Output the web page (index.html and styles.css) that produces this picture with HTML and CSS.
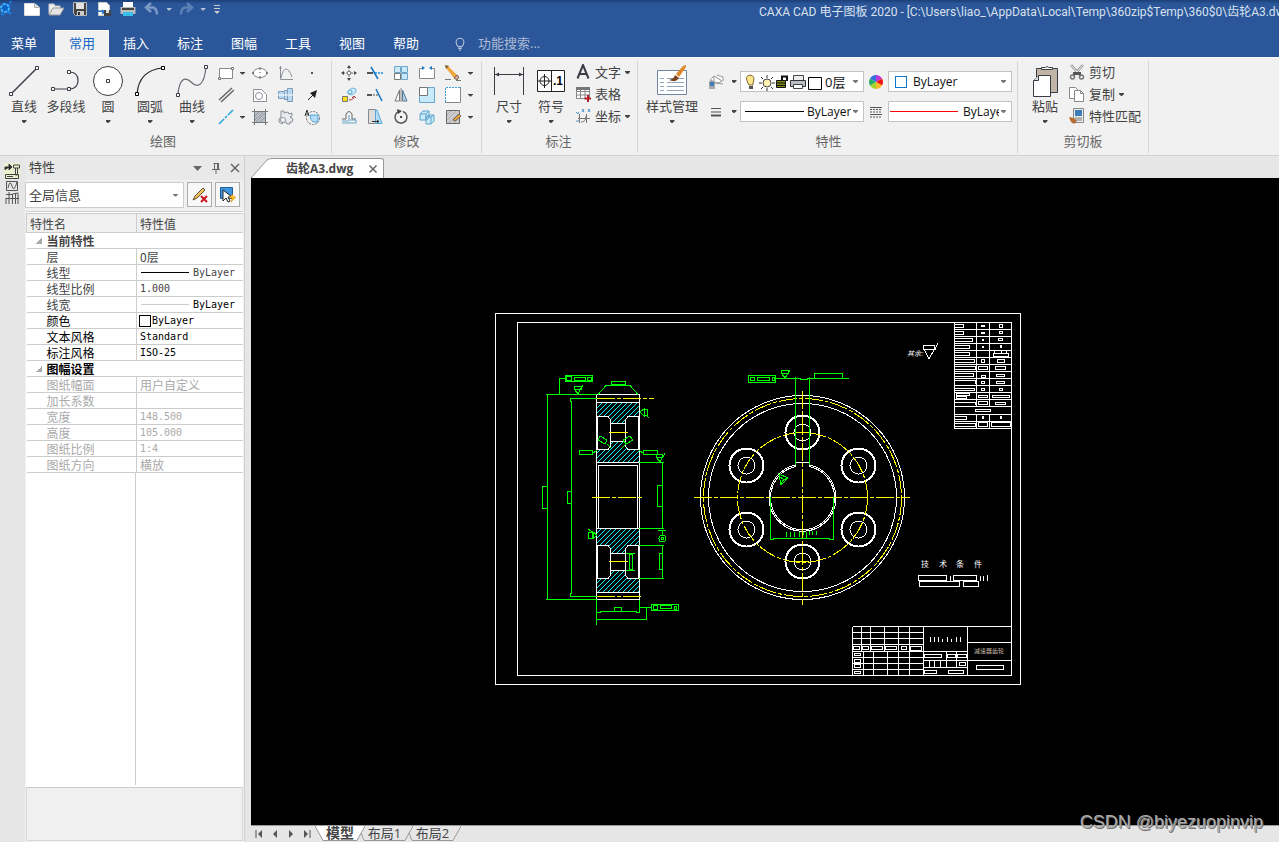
FILE: index.html
```html
<!DOCTYPE html>
<html lang="zh-CN">
<head>
<meta charset="utf-8">
<title>CAXA CAD 电子图板 2020</title>
<link rel="stylesheet" href="styles.css">
</head>
<body>
<div class="app">
<header class="titlebar">
  <div class="quick">
    <svg class="logo" viewBox="0 0 13 18"><path d="M1 6Q5 1 10 4L11 9L6 12L1 10Z" fill="#0b63c4"/><circle cx="5" cy="8" r="4" fill="none" stroke="#45b4ff" stroke-width="2" stroke-dasharray="3 1"/><path d="M7 11l4 3M1 13l3 2M10 3l1-2" stroke="#1683e8" stroke-width="2"/></svg>
    <button aria-label="新建"><svg viewBox="0 0 16 16"><path d="M0.500 2.500h10l5 4v8h-15z" fill="#fff" stroke="#ddd"/><path d="M10.500 2.500v4h5" fill="#ddd" stroke="#aaa"/></svg></button>
    <button aria-label="打开"><svg viewBox="0 0 16 16"><path d="M1 13V3h5l1 2h5v3" fill="#eee" stroke="#ccc"/><path d="M1 14L5 7h11l-4 7z" fill="#e4e4e4" stroke="#999"/></svg></button>
    <button aria-label="保存"><svg viewBox="0 0 16 16"><path d="M1.500 1.500h13v13h-11l-2-2z" fill="#444" stroke="#bbb"/><path d="M4 2h8v6H4z" fill="#e2e2e2"/><path d="M5 10h7v4H5z" fill="#ccc"/><path d="M6 11h2v3H6z" fill="#333"/></svg></button>
    <button aria-label="另存为"><svg viewBox="0 0 16 16"><path d="M2.500 1.500h8l3 3v10h-11z" fill="#fff" stroke="#ccc"/><path d="M1 10q5 0 7 1M6 9l3 2-3 2" stroke="#1c6fc0" stroke-width="1.500" fill="none"/><path d="M8 9h7v6H8z" fill="#444"/><path d="M10 9h3v3h-3z" fill="#ddd"/></svg></button>
    <button aria-label="打印"><svg viewBox="0 0 16 16"><path d="M3 1h10v5H3z" fill="#fff"/><path d="M.5 6h15v7H.5z" fill="#bbb"/><path d="M2 7h12v2H2z" fill="#444"/><path d="M3 11h10v4H3z" fill="#39c0ee"/></svg></button>
    <button aria-label="撤销"><svg viewBox="0 0 16 16"><path d="M7 2L2 6.500 7 11M2 6.500h7q4 1 4 7" fill="none" stroke="#7d99c6" stroke-width="2.500"/></svg></button>
    <button class="slim" aria-label="撤销列表"><i class="caret pale"></i></button>
    <button aria-label="重做"><svg viewBox="0 0 16 16"><path d="M9 2l5 4.500L9 11M14 6.500H7q-4 1-4 7" fill="none" stroke="#5f80b5" stroke-width="2.500"/></svg></button>
    <button class="slim" aria-label="重做列表"><i class="caret pale"></i></button>
    <button class="slim" aria-label="自定义"><svg viewBox="0 0 8 12"><path d="M1 2.500h6M1 5.500h6" stroke="#ccc" stroke-width="1"/><path d="M1 8h6L4 11z" fill="#ccc"/></svg></button>
  </div>
  <h1>CAXA CAD 电子图板 2020 - [C:\Users\liao_\AppData\Local\Temp\360zip$Temp\360$0\齿轮A3.dwg</h1>
</header>
<nav class="tabs">
  <button class="menu">菜单</button><button class="active">常用</button><button>插入</button><button>标注</button><button>图幅</button><button>工具</button><button>视图</button><button>帮助</button>
  <label class="search"><svg viewBox="0 0 12 16"><path d="M4 11Q1.500 8.500 1.500 6a4.500 4.500 0 0 1 9 0Q10.500 8.500 8 11zM4 13h4M5 15h2" fill="none" stroke="#b8c4da" stroke-width="1.200"/></svg><input type="text" placeholder="功能搜索..." aria-label="功能搜索"></label>
</nav>
<section class="ribbon">
  <div class="group draw">
    <div class="tools">
      <button class="big"><svg viewBox="0 0 32 32"><path d="M3 29L29 3" stroke="#3a3d46" stroke-width="1.500"/><path d="M1.500 27.500h3v3h-3zM27.500 1.500h3v3h-3z" fill="#fff" stroke="#3a3d46"/></svg><span>直线</span><i class="caret"></i></button>
      <button class="big"><svg viewBox="0 0 32 32"><path d="M3 24h16q9 0 9-8.500T19 7" fill="none" stroke="#3a3d46" stroke-width="1.200"/><path d="M1.500 22.500h3v3h-3zM17.500 22.500h3v3h-3zM17.500 5.500h3v3h-3z" fill="#fff" stroke="#3a3d46"/></svg><span>多段线</span></button>
      <button class="big"><svg viewBox="0 0 32 32"><circle cx="16" cy="16" r="14.500" fill="#fff" stroke="#3a3d46"/><path d="M14.500 14.500h3v3h-3z" fill="#fff" stroke="#3a3d46"/></svg><span>圆</span><i class="caret"></i></button>
      <button class="big"><svg viewBox="0 0 32 32"><path d="M3 29Q5 5 29 3" fill="none" stroke="#222" stroke-width="1.200"/><path d="M1.500 27.500h3v3h-3zM27.500 1.500h3v3h-3z" fill="#fff" stroke="#000"/></svg><span>圆弧</span><i class="caret"></i></button>
      <button class="big"><svg viewBox="0 0 32 32"><path d="M2 30C3 14 9 11 15 17S28 22 30 2" fill="none" stroke="#666b75" stroke-width="1.200"/><path d="M.5 28.500h3v3h-3zM28.500.5h3v3h-3z" fill="#fff" stroke="#3a3d46"/></svg><span>曲线</span><i class="caret"></i></button>
      <div class="grid draw-grid">
        <button aria-label="矩形"><svg viewBox="0 0 16 16"><path d="M1.500 3.500h13v10h-13z" fill="#fff" stroke="#888"/><path d="M.5 12.500h2v2h-2zM13.500 2.500h2v2h-2z" fill="#fff" stroke="#777"/></svg></button>
        <button aria-label="矩形选项"><i class="caret"></i></button>
        <button aria-label="椭圆"><svg viewBox="0 0 16 16"><ellipse cx="8" cy="8" rx="7" ry="4.500" fill="#fff" stroke="#888"/><path d="M7 3.500h2M7 12.500h2M0 8h2M14 8h2" stroke="#777" stroke-width="2"/><path d="M7.500 7.500h1" stroke="#555"/></svg></button>
        <button aria-label="公式曲线"><svg viewBox="0 0 16 16"><path d="M2.500 1v13.500H15M1 3h3M3 13Q5 4 8 4t6 8" fill="none" stroke="#8b9098"/></svg></button>
        <button aria-label="点"><svg viewBox="0 0 16 16"><path d="M7 7h2v2H7z" fill="#555"/></svg></button>
        <button aria-label="平行线"><svg viewBox="0 0 16 16"><path d="M1 13L14 1M3 15L16 3" stroke="#666" stroke-width="1.500"/></svg></button>
        <span></span>
        <button aria-label="局部放大"><svg viewBox="0 0 16 16"><path d="M1.500 2.500h8l5 5v7h-13z" fill="#fff" stroke="#8b9098"/><circle cx="7" cy="9" r="3.500" fill="none" stroke="#8b9098"/></svg></button>
        <button aria-label="孔轴"><svg viewBox="0 0 16 16"><path d="M.5 4.500h6v7h-6zM6.500 3.500h3v9h-3zM9.500 1.500h5v13h-5z" fill="#b9d8f2" stroke="#7f9cbb"/><path d="M0 8h16" stroke="#fff"/></svg></button>
        <button aria-label="箭头"><svg viewBox="0 0 16 16"><path d="M4 13L9 8" stroke="#222"/><path d="M13 3l-2 8-5-5z" fill="#222"/></svg></button>
        <button aria-label="构造线"><svg viewBox="0 0 16 16"><path d="M1 15L6 10M7 9l2-2M10 6l5-5" stroke="#25a4e0" stroke-width="1.500"/></svg></button>
        <button aria-label="构造线选项"><i class="caret"></i></button>
        <button aria-label="剖面线"><svg viewBox="0 0 16 16"><path d="M2.500 2.500h11v11h-11z" fill="#b7bdc4"/><path d="M3 7l4-4M3 11l8-8M4 13l9-9M8 13l5-5" stroke="#969ca3"/><path d="M2.500 0v16M13.500 0v16M0 2.500h16M0 13.500h16" fill="none" stroke="#73797f"/></svg></button>
        <button aria-label="齿轮"><svg viewBox="0 0 16 16"><path d="M3 5V2h3v2l4-1 1 2 3-1v3l-2 1 3 2-1 3h-2v2h-3l-1-2H6l-2 2-3-2v-3l2-2z" fill="#e8eaed" stroke="#8b9098"/><circle cx="5" cy="11" r="2.500" fill="#fff" stroke="#8b9098"/></svg></button>
        <button aria-label="圆弧文字"><svg viewBox="0 0 16 16"><circle cx="9" cy="9" r="6.500" fill="none" stroke="#777" stroke-dasharray="2 1"/><path d="M6 6h8v7H9q-3-2-3-7z" fill="#b5dcf6" stroke="#55a7d8"/><path d="M1 7l2-6 2 6M2 5h3" fill="none" stroke="#333"/></svg></button>
      </div>
    </div>
    <h2>绘图</h2>
  </div>
  <div class="group modify">
    <div class="tools">
      <div class="grid modify-grid">
        <button aria-label="平移"><svg viewBox="0 0 16 16"><path d="M8 2v4M8 10v4M2 8h4M10 8h4" stroke="#666" stroke-dasharray="2 1"/><path d="M6 3l2-3 2 3zM6 13l2 3 2-3zM3 6L0 8l3 2zM13 6l3 2-3 2z" fill="#444"/><path d="M6.500 6.500h3v3h-3z" fill="#fff" stroke="#888"/></svg></button>
        <button aria-label="裁剪"><svg viewBox="0 0 16 16"><path d="M0 8h6" stroke="#555" stroke-width="2"/><path d="M8 8h8" stroke="#1689dd" stroke-width="1.500" stroke-dasharray="2 1"/><path d="M4 2l7 12" stroke="#1676c4" stroke-width="1.500"/></svg></button>
        <button aria-label="阵列"><svg viewBox="0 0 16 16"><path d="M1.500 1.500h6v6h-6zM8.500 1.500h6v6h-6zM8.500 8.500h6v6h-6z" fill="#c9eafa" stroke="#6fa6c8"/><path d="M1.500 8.500h6v6h-6z" fill="#fff" stroke="#777"/></svg></button>
        <button aria-label="打断"><svg viewBox="0 0 16 16"><path d="M3 3.500H.5v10h15v-10H13" fill="#fff" stroke="#888"/><path d="M3 1v4l3-2zM13 1v4l-3-2z" fill="#1676c4"/></svg></button>
        <button aria-label="删除"><svg viewBox="0 0 16 16"><path d="M1 3l2-2 9 9-3 3z" fill="#f0a63b"/><path d="M9 13l3-3 2 2-2 3z" fill="#dba0a0" stroke="#765"/><path d="M0 14.500h6M11 15.500h5" stroke="#777"/><path d="M0 0l4 1-3 3z" fill="#7a5a2c"/></svg></button>
        <button aria-label="删除选项"><i class="caret"></i></button>
        <button aria-label="复制对象"><svg viewBox="0 0 16 16"><path d="M1.500 9.500h5v5h-5z" fill="#ffdf16" stroke="#777"/><path d="M7 7V4l4-3 4 1v3l-4 3z" fill="#c9eafa" stroke="#79b8dc"/><circle cx="9" cy="5" r="2" fill="#e6f6fd" stroke="#55a7d8"/><path d="M8 13q5 0 5-4M11 11l2-2 2 2" stroke="#b23b3b" fill="none"/></svg></button>
        <button aria-label="延伸"><svg viewBox="0 0 16 16"><path d="M0 8h5" stroke="#555" stroke-width="2"/><path d="M6 8h6" stroke="#444" stroke-dasharray="2 1"/><path d="M9 2l6 12" stroke="#1676c4" stroke-width="1.500"/></svg></button>
        <button aria-label="镜像"><svg viewBox="0 0 16 16"><path d="M6.500 3v11H2z" fill="#fff" stroke="#777"/><path d="M9.500 3v11H14z" fill="#b6cfdf" stroke="#537b99"/><path d="M8 1v14" stroke="#888"/></svg></button>
        <button aria-label="缩放"><svg viewBox="0 0 16 16"><path d="M.5.5h15v15H.5z" fill="#c9eafa" stroke="#6aa6cb"/><path d="M.5.5h8v8h-8z" fill="#fff" stroke="#777"/></svg></button>
        <button aria-label="分解"><svg viewBox="0 0 16 16"><path d="M.5.5h15v15H.5z" fill="#fff"/><path d="M15.500 0v15.500H0" fill="none" stroke="#888"/><path d="M.5 15V.5H15" fill="none" stroke="#3aa1da" stroke-dasharray="2 1"/></svg></button>
        <button aria-label="分解选项"><i class="caret"></i></button>
        <button aria-label="等距线"><svg viewBox="0 0 16 16"><path d="M1 10h4V5q3-5 6 0v5h4" fill="none" stroke="#666"/><path d="M1 14h14v-3h-7V6M1 12h7" fill="none" stroke="#6aa6cb"/></svg></button>
        <button aria-label="拉伸"><svg viewBox="0 0 16 16"><path d="M1.500.5h7v14h-7z" fill="#ddd" stroke="#888"/><path d="M8.500 1H10l5 13.500H8.500z" fill="#b5def5" stroke="#55a7d8"/><path d="M5 12.500h7M10 11l2 1.500-2 1.500" fill="none" stroke="#333"/></svg></button>
        <button aria-label="旋转"><svg viewBox="0 0 16 16"><path d="M6 2.500A6 6 0 1 0 10 2.500" fill="none" stroke="#555" stroke-width="1.500"/><path d="M4 0l5 2-4 3z" fill="#444"/><path d="M7 7h2v2H7z" fill="#444"/></svg></button>
        <button aria-label="三维"><svg viewBox="0 0 16 16"><path d="M1 5l3-3h6v7l-3 2H1zM7 8l3-2h5v6l-3 3H7z" fill="#c9eafa" stroke="#5fa3cb"/><path d="M1 5h6v6M7 5l3-3M7 8h5v7M12 8l3-2" fill="none" stroke="#5fa3cb"/></svg></button>
        <button aria-label="编辑剖面"><svg viewBox="0 0 16 16"><path d="M1.500 1.500h13v13h-13z" fill="#ccc" stroke="#666"/><path d="M2 6l4-4M2 11l9-9M4 14l9-9M9 14l5-5" stroke="#aaa"/><path d="M8 11l6-6 2 2-6 5z" fill="#f0a63b" stroke="#765"/></svg></button>
        <button aria-label="编辑剖面选项"><i class="caret"></i></button>
      </div>
    </div>
    <h2>修改</h2>
  </div>
  <div class="group annotate">
    <div class="tools">
      <button class="big"><svg viewBox="0 0 32 32"><path d="M1.500 2v28M30.500 2v28M2 9.500h28" stroke="#3a3d46"/><path d="M2 9.500l4-2v4zM30 9.500l-4-2v4z" fill="#3a3d46"/></svg><span>尺寸</span><i class="caret"></i></button>
      <button class="big"><svg viewBox="0 0 32 32"><path d="M2.500 5.500h27v21h-27zM16.500 5.500v21" fill="#fff" stroke="#222"/><circle cx="9.500" cy="16" r="4.500" fill="none" stroke="#222"/><path d="M3 16h13M9.500 9v14" stroke="#222"/><text x="18" y="20" class="iconnum">.1</text></svg><span>符号</span><i class="caret"></i></button>
      <div class="rows">
        <button><svg viewBox="0 0 16 16"><path d="M2.500 14.500L8 1l5.500 13.500M5 10h6" fill="none" stroke="#3a3d46" stroke-width="2"/></svg>文字<i class="caret"></i></button>
        <button><svg viewBox="0 0 16 16"><path d="M1.500 1.500h13v11h-13zM1.500 5.500h13M1.500 9h13M5.500 3v9M10 3v9" fill="#fff" stroke="#888"/><path d="M1 1h14v3H1z" fill="#777"/><path d="M13 9v7M9.500 12.500h7" stroke="#b51e27" stroke-width="2"/></svg>表格</button>
        <button><svg viewBox="0 0 16 16"><path d="M4.500 6v9M11.500 6v9M3 10.500h12M6 14q5 0 5-6" fill="none" stroke="#777"/><path d="M1 4l2 2 1-2M7 1l2 3M9 1L7 4M13 1l2 3M15 1l-2 3M1 13h3" stroke="#5098c8" fill="none"/></svg>坐标<i class="caret"></i></button>
      </div>
    </div>
    <h2>标注</h2>
  </div>
  <div class="group props">
    <div class="tools">
      <button class="big wide"><svg viewBox="0 0 32 32"><path d="M1.500 5.500h29v24h-29z" fill="#fff" stroke="#6c86a3"/><path d="M4 13.500h4M4 17.500h4M4 21.500h4M4 25.500h4M11 13.500h17M11 17.500h17M11 21.500h17M11 25.500h17" stroke="#92a5bf"/><path d="M13 15q5-1 6-5l4 3q-3 5-10 2z" fill="#7b4320"/><path d="M20 9L27 1l3-1v2l-7 10z" fill="#df8729"/></svg><span>样式管理</span><i class="caret"></i></button>
      <div class="propgrid">
        <button aria-label="图层"><svg viewBox="0 0 16 16"><path d="M2 6l4-4 8 5-4 2zM6 2v6M9 1l6 2v4M7 9l8 1" fill="#fff" stroke="#999"/><path d="M1 7h6v8H1z" fill="#aaa"/><path d="M2 8h4v4H2z" fill="#3a7db8"/></svg></button>
        <button aria-label="图层选项"><i class="caret"></i></button>
        <div class="combo layer">
          <svg viewBox="0 0 80 18"><path d="M4 10Q0 3 6 2q6 1 3 8v2H5z" fill="#ffe78d" stroke="#7a6630"/><path d="M5 13h4v3H5z" fill="#555"/><circle cx="23" cy="10" r="4" fill="#fff2b3" stroke="#444"/><path d="M23 2v3M23 15v3M15 10h3M28 10h3M17 4l2 2M27 14l2 2M29 4l-2 2M17 16l2-2" stroke="#333"/><path d="M32.500 7.500h9v7h-9z" fill="#7d8a17" stroke="#111"/><path d="M33 10h9M33 12.500h9" stroke="#111"/><path d="M38 7V3.500h5V8" fill="none" stroke="#111" stroke-width="2"/><path d="M49.500 2.500h10v5h-10z" fill="#eee" stroke="#444"/><path d="M46.500 7.500h15v6h-15z" fill="#b9bec4" stroke="#333"/><path d="M49.500 11.500h9v4h-9z" fill="#fff" stroke="#444"/><path d="M64.500 4.500h13v12h-13z" fill="#fff" stroke="#000"/></svg>
          <select aria-label="当前图层"><option>0层</option></select><i class="caret"></i></div>
        <button aria-label="颜色"><svg viewBox="0 0 16 16"><path d="M8 8V1a7 7 0 0 1 6 3.500z" fill="#bb3ad8"/><path d="M8 8l6-3.500a7 7 0 0 1 0 7z" fill="#f11414"/><path d="M8 8l6 3.500A7 7 0 0 1 8 15z" fill="#f7b925"/><path d="M8 8v7a7 7 0 0 1-6-3.500z" fill="#a5d52d"/><path d="M8 8l-6 3.500a7 7 0 0 1 0-7z" fill="#25ad65"/><path d="M8 8L2 4.500A7 7 0 0 1 8 1z" fill="#366ee0"/></svg></button>
        <div class="combo"><i class="swatch"></i><select aria-label="当前颜色"><option>ByLayer</option></select><i class="caret"></i></div>
        <button aria-label="线宽"><svg viewBox="0 0 16 16"><path d="M3 4.500h10M3 8h10" stroke="#555"/><path d="M3 11.500h10" stroke="#555" stroke-width="2"/></svg></button>
        <button aria-label="线宽选项"><i class="caret"></i></button>
        <div class="combo"><i class="line"></i><select aria-label="当前线宽"><option>ByLayer</option></select><i class="caret"></i></div>
        <button aria-label="线型"><svg viewBox="0 0 16 16"><path d="M2 3.500h12M2 10.500h12" stroke="#555"/><path d="M2 5.500h12M2 8h12M2 13h12" stroke="#555" stroke-dasharray="2 1"/></svg></button>
        <div class="combo"><i class="line red"></i><select aria-label="当前线型"><option>ByLayer</option></select><i class="caret"></i></div>
      </div>
    </div>
    <h2>特性</h2>
  </div>
  <div class="group clip">
    <div class="tools">
      <button class="big"><svg viewBox="0 0 32 32"><path d="M7.500 3.500h21v24h-21z" fill="#c1b5a8" stroke="#3a3d46"/><path d="M12.500 4.500v-2h4q1.500-2 3 0h4v2z" fill="#fff" stroke="#3a3d46"/><path d="M4.500 15.500l5-5h12v21h-17z" fill="#fff" stroke="#3a3d46"/><path d="M4.500 15.500h5v-5" fill="#ddd" stroke="#3a3d46"/></svg><span>粘贴</span><i class="caret"></i></button>
      <div class="rows">
        <button><svg viewBox="0 0 16 16"><path d="M2 1l10 11M14 1L4 12" stroke="#888" stroke-width="2.500"/><path d="M2 1l8 9M14 1l-8 9" stroke="#fff"/><path d="M4 8h8v3H4z" fill="#555"/><circle cx="3.500" cy="13" r="2" fill="none" stroke="#777" stroke-width="1.500"/><circle cx="12.500" cy="13" r="2" fill="none" stroke="#777" stroke-width="1.500"/></svg>剪切</button>
        <button><svg viewBox="0 0 16 16"><path d="M.5 1.500h6l3 3v8h-9z" fill="#fff" stroke="#888"/><path d="M5.500 4.500h6l3 3v8h-9z" fill="#fff" stroke="#888"/><path d="M11.500 4.500v3h3" fill="none" stroke="#888"/></svg>复制<i class="caret"></i></button>
        <button><svg viewBox="0 0 16 16"><path d="M4.500.5h10v14h-10z" fill="#eee" stroke="#888"/><path d="M6 2h7v6H6z" fill="#3a7db8"/><path d="M6 10h7M6 12h7" stroke="#777"/><path d="M0 9l5 1 3 3-3 3-3-2z" fill="#b56b31"/></svg>特性匹配</button>
      </div>
    </div>
    <h2>剪切板</h2>
  </div>
</section>
<main class="work">
  <aside class="rail"><button aria-label="设计中心"><svg viewBox="0 0 16 42"><path d="M0 1h16v15H0z" fill="#edf0cf"/><path d="M1 8V5h5M5 2l3 3-3 3z" fill="#333" stroke="#333"/><path d="M9.500 3h6v3h-6zM11.500 6v7h2V6M1.500 12.500h13v4h-13zM3 14.500h6" fill="none" stroke="#444"/><path d="M2.500 19.500h11v9h-11zM4 26q2-9 4-2t5-4" fill="none" stroke="#555"/><path d="M2 32.500h6M2 36.500h13M5 30v12M2 42v-6M8.500 42V32l6-1M11.500 32v10M14 32v10" fill="none" stroke="#555"/></svg></button></aside>
  <section class="panel">
    <header><h2>特性</h2><button aria-label="菜单"><svg viewBox="0 0 12 12"><path d="M2 4h9L6.500 9z" fill="#666"/></svg></button><button aria-label="固定"><svg viewBox="0 0 12 12"><path d="M3.500 1.500h5M4.500 1v6M7.500 1v6M8.500 1v6M2 7.500h8M6 8v4" stroke="#666" fill="none"/></svg></button><button aria-label="关闭"><svg viewBox="0 0 12 12"><path d="M2 2l8 8M10 2l-8 8" stroke="#666" stroke-width="1.500"/></svg></button></header>
    <div class="picker"><div class="combo"><select aria-label="对象"><option>全局信息</option></select><i class="caret"></i></div>
      <button aria-label="清除选择"><svg viewBox="0 0 18 18"><path d="M2 14l2-4 8-8 2 2-8 8z" fill="#f3c45f" stroke="#5a4a20"/><path d="M10 10l6 6M16 10l-6 6" stroke="#c91720" stroke-width="2"/></svg></button>
      <button aria-label="快速选择"><svg viewBox="0 0 18 18"><path d="M1.500 1.500h12v11h-12z" fill="#3e93dc" stroke="#1c5e9d"/><path d="M4 4v11l3-3 2 4 2-1-2-4h4z" fill="#fff" stroke="#222"/><path d="M14 8l-4 4h3l-1 4 5-5h-3z" fill="#ffc51a" stroke="#d87c00" stroke-width=".5"/></svg></button></div>
    <div class="sheet">
      <table>
        <thead><tr><th>特性名</th><th>特性值</th></tr></thead>
        <tbody>
          <tr class="section"><th colspan="2">当前特性</th></tr>
          <tr><td>层</td><td>0层</td></tr>
          <tr><td>线型</td><td><span class="sample"><i></i>ByLayer</span></td></tr>
          <tr><td>线型比例</td><td>1.000</td></tr>
          <tr><td>线宽</td><td class="dark"><span class="sample thin"><i></i>ByLayer</span></td></tr>
          <tr class="dark"><td>颜色</td><td class="color"><i></i>ByLayer</td></tr>
          <tr class="dark"><td>文本风格</td><td>Standard</td></tr>
          <tr class="dark"><td>标注风格</td><td>ISO-25</td></tr>
          <tr class="section dark"><th colspan="2">图幅设置</th></tr>
          <tr class="off"><td>图纸幅面</td><td>用户自定义</td></tr>
          <tr class="off"><td>加长系数</td><td></td></tr>
          <tr class="off"><td>宽度</td><td>148.500</td></tr>
          <tr class="off"><td>高度</td><td>105.000</td></tr>
          <tr class="off"><td>图纸比例</td><td>1:4</td></tr>
          <tr class="off"><td>图纸方向</td><td>横放</td></tr>
        </tbody>
      </table>
      <div class="filler"></div>
    </div>
    <div class="hint"></div>
  </section>
  <section class="docs">
    <div class="doctabs"><svg viewBox="0 0 22 20"><path d="M0 20L16 2Q18 .5 22 .5V20z" fill="#fff"/><path d="M0 20L16 2Q18 .5 22 .5" fill="none" stroke="#999"/></svg><div class="doctab"><span>齿轮A3.dwg</span><button aria-label="关闭文档"><svg viewBox="0 0 10 10"><path d="M1.500 1.500l7 7M8.500 1.500l-7 7" stroke="#666" stroke-width="1.500"/></svg></button></div></div>
    <div class="canvas">
      <svg viewBox="251 178 1028 647" role="img" aria-label="齿轮A3">
        <defs><pattern id="hatch" width="5" height="5" patternUnits="userSpaceOnUse"><path d="M-1 6L6-1M-1 1L1-1M4 6L6 4" stroke="#0ff"/></pattern></defs>
        <g class="w">
          <path d="M495.500 313.500h525v371h-525zM517.500 322.500h494v353h-494z"/>
          <path d="M954.500 322.500v106h57M976.500 322.500v84M989.500 322.500v84M976.500 414.500v14M989.500 414.500v14M954.500 329.500h57M954.500 336.500h57M954.500 343.500h57M954.500 350.500h57M954.500 357.500h57M954.500 364.500h57M954.500 371.500h57M954.500 378.500h57M954.500 385.500h57M954.500 392.500h57M954.500 399.500h57M954.500 406.500h57M954.500 414.500h57M954.500 421.500h57"/>
          <path d="M954.500 324.500h9v3h-9M954.500 331.500h9v3h-9M954.500 338.500h18v3h-18M954.500 345.500h15v3h-15M954.500 352.500h15v3h-15M954.500 359.500h20v3h-20M954.500 366.500h21v3h-21M954.500 373.500h19v3h-19M954.500 380.500h21v3M954.500 388.500h20v2h-20M956.500 393.500h13v2h-13zM956.500 396.500h10v2h-10zM954.500 402.500h21v2M975.500 409.500h15v2h-15zM954.500 416.500h12v3h-12M954.500 423.500h21v3h-21"/>
          <path d="M981.500 325.500h3v1h-3zM981.500 332.500h3v1h-3zM982.500 339.500h1v1h-1zM982.500 346.500h1v1h-1zM981.500 359.500h3v3h-3zM978.500 366.500h9v3h-9zM981.500 375.500h4v2h-4zM981.500 381.500h3v2h-3zM981.500 388.500h3v2h-3zM978.500 395.500h9v2h-9zM978.500 401.500h9v3h-9zM982.500 416.500h1v2h-1zM978.500 422.500h9v4h-9z"/>
          <path d="M999.500 324.500h3v3h-3zM999.500 331.500h3v2h-3zM998.500 338.500h4v2h-4zM1000.500 345.500h1v2h-1zM993.500 353.500h15v3h-15zM994.500 351v2M1001.500 351v2M1006.500 351v2M997.500 359.500h7v3h-7zM995.500 366.500h10v3h-10zM996.500 374.500h8v2h-8zM996.500 381.500h8v2h-8zM999.500 388.500h3v2h-3zM992.500 395.500h17v2h-17zM995.500 402.500h10v2h-10zM1000.500 416.500h1v2h-1zM991.500 422.500h19v4h-19z"/>
          <path d="M923.500 345.500h11v4h-11zM924 349.500l5 9 9-15M924 349.500h12"/>
          <path d="M918.500 575.500h28v5h-28zM950.500 576v5M953.500 575.500h23v5h-23zM980.500 576v5M983.500 576v5M987.500 575v6M919.500 581.500h40v5h-40zM963.500 581.500h15v5h-15z"/>
          <path d="M852.500 626.500h159M852.500 626.500v49M923.500 626.500v49M967.500 626.500v49M852.500 632.500h71M852.500 638.500h71M852.500 644.500h71M852.500 651.500h115M852.500 657.500h71M852.500 663.500h71M852.500 669.500h71M861.500 626v25M870.500 626v25M884.500 626v25M898.500 626v49M909.500 626v49M863.500 651v24M873.500 651v24M887.500 651v24"/>
          <path d="M853.500 646.500h6v3h-6zM862.500 646.500h6v3h-6zM871.500 646.500h11v3h-11zM885.500 646.500h11v3h-11zM901.500 646.500h5v3h-5zM910.500 646.500h11v4h-11zM854.500 653.500h6v2h-6zM854.500 659.500h6v3h-6zM854.500 664.500h6v3h-6zM854.500 671.500h6v2h-6z"/>
          <path d="M930.500 637v5M934.500 637v5M938.500 637v5M942.500 639v3M947.500 637v5M951.500 639v3M956.500 637v5M960.500 637v5M923.500 660.500h44M923.500 667.500h44M946.500 651v16M956.500 651v16M929.500 660v7M934.500 660v7M940.500 660v7M924.500 654.500h17v3h-17zM947.500 654.500h8v3h-8zM957.500 654.500h9v3h-9zM959.500 662.500h6v3h-6zM924.500 670.500h12v3h-12zM948.500 670.500h15v3h-15zM967.500 642.500h44M967.500 660.500h44M976.500 665.500h27v4h-27z"/>
        </g>
        <g class="hatched">
          <path d="M597 402H639V416H628L626 419V423H610V419L608 416H597z"/><path d="M597 449H608L610 446V441H626V446L628 449H639V462H597z"/>
          <path d="M597 528H639V545H628L626 548V553H610V548L608 545H597z"/><path d="M597 578H608L610 575V570H626V575L628 578H639V592H597z"/>
        </g>
        <g class="w">
          <path d="M596.500 394.500h43v205h-43zM596.500 402.500h43M596.500 462.500h43M596.500 528.500h43M596.500 592.500h43M598.500 528v-63h39v63M597 416.500h11l2.500 3v27l-2.500 3h-11M639 416.500h-11l-2.500 3v27l2.500 3h11M610.500 423.500h15M610.500 441.500h15M597 545.500h11l2.500 3v27l-2.500 3h-11M639 545.500h-11l-2.500 3v27l2.500 3h11M610.500 553.500h15M610.500 570.500h15M597.500 416v33M638.500 416v33M597.500 545v33M638.500 545v33"/>
          <circle cx="802.500" cy="497.500" r="102"/><circle cx="802.500" cy="497.500" r="94"/>
          <path d="M795.500 466.500A32 32 0 1 0 809.500 466.500M795.500 465A33.500 33.500 0 1 0 809.500 465M795.500 466v-3.500h14V466"/>
        </g>
        <g class="holes"><circle cx="802.500" cy="432.500" r="17"/><circle cx="858.500" cy="465.500" r="17"/><circle cx="858.500" cy="529.500" r="17"/><circle cx="802.500" cy="561.500" r="17"/><circle cx="746.500" cy="529.500" r="17"/><circle cx="746.500" cy="465.500" r="17"/></g>
        <g class="w"><circle cx="802.500" cy="432.500" r="8.500"/><circle cx="858.500" cy="465.500" r="8.500"/><circle cx="858.500" cy="529.500" r="8.500"/><circle cx="802.500" cy="561.500" r="8.500"/><circle cx="746.500" cy="529.500" r="8.500"/><circle cx="746.500" cy="465.500" r="8.500"/></g>
        <g class="y"><path d="M597 398.500h57M597 596.500h44M592 497.500h52M694 497.500h216M802.500 391v214"/><circle cx="802.500" cy="497.500" r="99"/><circle cx="802.500" cy="497.500" r="65"/></g>
        <g class="ys"><path d="M609 432.500h19M609 561.500h19M795 432.500h14M795 561.500h14"/></g>
        <g class="g">
          <path d="M546 394.500h51M547.500 394.500v205M546 599.500h51M597 398.500h-26.500v3h1v192h-1v3h26M547 486.500h-4.500v22h4.500M571 491.500h-3.500v12h3.500"/>
          <path d="M559.500 394v-15.500h6M565.500 375.500h27v6h-27zM566.500 376.500h5v4h-5zM574.500 377.500h11v3h-11zM587.500 377.500h4v3h-4zM574.500 386.500h7v3h-7zM575 390l3 4 5-9M598 394.500l8-9h24l8 9M611.500 381.500h14v3h-14z"/>
          <path d="M640 412l4-3v7zM644.500 409.500h3v6h-3zM646 415l3 3M579.500 450.500h13v4h-13zM592 454l5-4M643.500 450.500h14v4h-14zM639 450l5 4M600 436l7 4-2 4-7-4zM607 444l4 4M630 436l-7 4 3 4 7-4zM626 444l-4 4M656.500 454.500h6v3h-6zM657 458l3 4 5-9"/>
          <path d="M639 462.500h25M662.500 462v66M639 528.500h25M662 485.500h-4.500v21h4.500M658 530.500h8M662.500 530v5M639 545.500h25M662.500 545v33M639 578.500h25M662 553.500h-2.500v16h2.500M626 553.500h9M626 570.500h9M629.500 554.500h3v15h-3zM588 529l6 4 3 3M588.500 532.500h4v6h-4zM593 532l4 3-4 4z"/><circle cx="662.500" cy="538.500" r="3.500"/><circle cx="662.500" cy="538.500" r="1"/>
          <path d="M596.500 600v25M597 612.500h3v-1h36v1h3.500V600M614.500 611v-3.500h7v3.500M597 619.500h49.500V607M639 607.500h12M651.500 604.500h27v6h-27zM653.500 605.500h4v4h-4zM660.500 605.500h11v3h-11zM674.500 606.500h2v3h-2z"/>
          <path d="M776 378.500h20M809 378.500h40M796 378.500h4v1h7v-1h3M795.500 377v88M809.500 377v88M814.500 378v-4.500h28v4.500M748.500 375.500h27v7h-27zM750.500 377.500h4v3h-4zM757.500 377.500h12v3h-12zM772.500 377.500h2v3h-2zM781.500 370.500h7v3h-7zM782 374l3 4 5-8"/>
          <path d="M770.500 497v42.500h3v-1h56v1h4V497M786.500 532v5M790.500 532v5M794.500 532v5M799.500 532v5M803.500 532v3M806.500 532v6M809.500 531v4M812.500 531v4M816.500 531v4M779 474l2 11 7-7zM779 476l5 4 3-2M781 484l3-5"/>
        </g>
        <text class="note" x="907" y="356">其余:</text>
        <g class="cond"><text x="921" y="567">技</text><text x="939" y="567">术</text><text x="956" y="567">条</text><text x="974" y="567">件</text></g>
        <text class="part" x="974" y="653">减速器齿轮</text>
      </svg>
    </div>
    <footer class="sheets">
      <button aria-label="首页"><svg viewBox="0 0 8 8"><path d="M1 0v8" stroke="#555"/><path d="M7 0v8L3 4z" fill="#555"/></svg></button><button aria-label="上一页"><svg viewBox="0 0 8 8"><path d="M6 0v8L2 4z" fill="#555"/></svg></button><button aria-label="下一页"><svg viewBox="0 0 8 8"><path d="M2 0v8l4-4z" fill="#555"/></svg></button><button aria-label="末页"><svg viewBox="0 0 8 8"><path d="M7 0v8" stroke="#555"/><path d="M1 0v8l4-4z" fill="#555"/></svg></button>
      <svg class="edge" viewBox="0 0 9 15"><path d="M0 0h9v15z" fill="#fff"/><path d="M0 0l8 14.500h1" fill="none" stroke="#999"/></svg><button class="sheet-tab on">模型</button><svg class="edge" viewBox="0 0 9 15"><path d="M0 0h9L1 14H0z" fill="#fff"/><path d="M9 0L1 14.500H0M5 7l3 7.500h1" fill="none" stroke="#999"/></svg><button class="sheet-tab">布局1</button><svg class="edge" viewBox="0 0 9 15"><path d="M9 0L1 14.500H0M5 7l3 7.500h1" fill="none" stroke="#999"/></svg><button class="sheet-tab">布局2</button><svg class="edge" viewBox="0 0 9 15"><path d="M9 0L1 14.500H0" fill="none" stroke="#999"/></svg>
    </footer>
  </section>
</main>
<div class="mark">CSDN @biyezuopinvip</div>
</div>
</body>
</html>
```
FILE: styles.css
```css
* { box-sizing: border-box; }
body { margin: 0; font: 13px/18px "Open Sans", "Noto Sans CJK SC", sans-serif; color: #444; }
h1, h2 { margin: 0; font-size: 13px; font-weight: 400; white-space: nowrap; }
button { margin: 0; padding: 0; border: 0; background: none; font: inherit; color: inherit; white-space: nowrap; }
select, input { font: inherit; }
svg { display: block; flex: none; }
.app { position: relative; display: flex; flex-direction: column; height: 100vh; overflow: hidden; background: #e6e6e6; }
.caret { display: block; flex: none; width: 5px; height: 3px; background: #444; clip-path: polygon(0 0, 100% 0, 100% 34%, 60% 100%, 40% 100%, 0 34%); }
.caret.pale { background: #b8c4da; }

.titlebar { display: flex; flex: none; height: 30px; overflow: hidden; background: linear-gradient(#1c3f78, #2b579a 4px); color: #d9e1ee; }
.quick { display: flex; flex: none; align-items: center; width: 759px; height: 18px; }
.quick button { display: grid; place-items: center; width: 24px; }
.quick .slim { width: 10px; }
.quick button svg { width: 16px; height: 16px; }
.quick .slim svg { width: 8px; height: 12px; }
.quick .logo { width: 13px; height: 18px; margin-right: 7px; }
.quick .slim:last-child { margin-left: 4px; }
.titlebar h1 { padding-top: 3px; font-family: Roboto, "Noto Sans CJK SC", sans-serif; font-size: 12px; }

.tabs { display: flex; flex: none; height: 27px; background: #2b579a; color: #fff; }
.tabs button { width: 54px; padding-bottom: 2px; }
.tabs .menu { width: 48px; margin-right: 7px; }
.tabs .active { border: 1px solid #f9f9f9; border-bottom: 0; background: #f1f1f1; color: #1467c4; }
.search { display: flex; align-items: center; gap: 12px; margin-left: 21px; }
.search svg { width: 12px; height: 14px; }
.search input { width: 120px; padding: 0 0 2px; border: 0; outline: 0; background: none; color: #b8c4da; }
.search input::placeholder { color: #aebbd3; opacity: 1; }

.ribbon { display: flex; flex: none; height: 99px; padding-top: 3px; border-top: 1px solid #f9f9f9; border-bottom: 1px solid #d2d2d2; background: #f1f1f1; }
.group { display: flex; flex: none; flex-direction: column; height: 92px; border-right: 1px solid #d6d6d6; }
.group h2 { text-align: center; color: #666; line-height: 20px; }
.tools { display: flex; height: 70px; }
.draw { width: 332px; padding: 0 8px 0 3px; }
.modify { width: 150px; padding: 0 4px; }
.annotate { width: 156px; padding: 0 8px 0 6px; }
.props { width: 380px; padding-left: 2px; }
.clip { width: 131px; padding: 0 6px; }
.big { display: flex; flex: none; flex-direction: column; align-items: center; width: 42px; padding-top: 4px; }
.big.wide { width: 64px; }
.big svg { width: 32px; height: 32px; }
.big .caret { margin-top: 5px; }
.grid { display: grid; grid-auto-rows: 22px; padding-top: 1px; }
.draw-grid { grid-template-columns: 25px 9px 26px 26px 26px; }
.modify-grid { grid-template-columns: repeat(5, 26px) 9px; }
.grid button { display: grid; place-items: center; }
.grid svg, .rows svg, .propgrid > button svg { width: 16px; height: 16px; }
.rows { display: flex; flex-direction: column; padding-left: 3px; }
.rows button { display: flex; align-items: center; gap: 4px; height: 22px; }
.rows .caret { margin-top: 1px; }
.iconnum { font: bold 12px "Liberation Sans", sans-serif; }
.propgrid { display: grid; grid-template-columns: 24px 12px 124px 24px 124px; grid-auto-rows: 21px; row-gap: 9px; padding-top: 10px; }
.propgrid > button { display: grid; place-items: center; }
.combo { display: flex; align-items: center; min-width: 0; border: 1px solid #c3c3c3; background: #fff; }
.combo select { flex: 1; min-width: 0; height: 18px; padding: 0; border: 0; appearance: none; background: none; color: #111; font-size: 12px; line-height: 18px; }
.combo .caret { margin: 0 5px 0 2px; background: #777; }
.layer svg { width: 80px; height: 18px; margin-left: 3px; }
.layer select { padding-left: 1px; font-size: 13px; }
.swatch { width: 12px; height: 12px; margin: 0 6px; border: 1px solid #0f77cc; }
.line { flex: none; width: 59px; height: 1px; margin: 0 3px 0 4px; background: #000; }
.line.red { width: 68px; margin: 0 5px 0 1px; background: #f00; }

.work { display: flex; flex: 1; min-height: 0; }
.rail { flex: none; width: 25px; padding: 6px 4px; }
.rail svg { width: 16px; height: 42px; }
.panel { display: flex; flex: none; flex-direction: column; width: 220px; border-right: 1px solid #d0d0d0; background: #f0f0f0; }
.panel header { display: flex; flex: none; align-items: center; height: 24px; padding-left: 4px; background: #e9e9e9; }
.panel header h2 { flex: 1; padding-bottom: 2px; }
.panel header button { width: 19px; }
.panel header svg { width: 12px; height: 12px; margin: auto; }
.picker { display: flex; flex: none; gap: 3px; height: 31px; padding: 2px 4px 3px 0; }
.picker .combo { flex: 1; border-color: #ccc; }
.picker .combo select { padding-left: 3px; color: #444; font-size: 13px; }
.picker button { display: grid; place-items: center; width: 25px; height: 25px; border: 1px solid #adadad; background: #f8f8f8; }
.picker button svg { width: 18px; height: 18px; }
.sheet { display: flex; flex: 1; flex-direction: column; margin: 0 1px; padding-top: 1px; border-top: 1px solid #d0d0d0; border-bottom: 1px solid #ccc; background: #fff; }
table { width: 100%; border-collapse: collapse; table-layout: fixed; font: 12px/15px "Noto Sans CJK SC", sans-serif; }
table th, table td { height: 16px; padding: 0; border-bottom: 1px solid #ccc; text-align: left; font-weight: 400; line-height: 15px; white-space: nowrap; }
thead th { height: 19px; padding-left: 3px; background: #f0f0f0; border: 1px solid #ccc; }
thead th:last-child { border-right: 0; }
tbody td:first-child { padding-left: 20px; border-right: 1px solid #ccc; }
thead th:first-child { width: 110px; }
tbody td:last-child { padding-left: 3px; font-family: "DejaVu Sans Mono", "Noto Sans CJK SC", monospace; font-size: 10px; }
tbody tr:nth-child(2) td:last-child, tbody tr:nth-child(10) td:last-child, tbody tr:nth-child(15) td:last-child { font-size: 12px; font-family: "Noto Sans CJK SC", sans-serif; }
tbody .section th { padding-left: 20px; font-weight: 700; background: linear-gradient(135deg, transparent 50%, #aaa 50%) 9px 5px / 6px 6px no-repeat; }
.dark { color: #000; }
.off { color: #aaa; }
.sample { display: flex; align-items: center; gap: 4px; }
.sample i { width: 48px; height: 1px; margin-left: 1px; background: #000; }
.thin i { background: #ccc; }
tbody td.color { padding-left: 2px; }
.color i { display: inline-block; width: 12px; height: 12px; margin-right: 1px; border: 1px solid #000; vertical-align: middle; }
.filler { flex: 1; width: 110px; border-right: 1px solid #ccc; margin-bottom: 2px; }
.hint { flex: none; height: 53px; margin: 0 1px 1px; border: 1px solid #d8d8d8; border-top: 0; }

.docs { display: flex; flex: 1; flex-direction: column; min-width: 0; margin-left: 6px; }
.doctabs { display: flex; flex: none; align-items: flex-end; height: 22px; }
.doctabs > svg { width: 22px; height: 20px; }
.doctab { display: flex; align-items: center; gap: 15px; height: 20px; padding: 0 5px 0 13px; border: 1px solid #999; border-left: 0; border-bottom: 0; border-radius: 0 3px 0 0; background: #fff; font-size: 12px; font-weight: 700; }
.doctab button svg { width: 10px; height: 10px; }
.canvas { flex: 1; min-height: 0; background: #000; }
.canvas svg { width: 100%; height: 100%; shape-rendering: crispEdges; }
.w, .g, .y, .ys, .holes, .hatched { fill: none; stroke: #fff; stroke-width: 1; }
.g { stroke: #0f0; }
.y, .ys { stroke: #ff0; }
.y { stroke-dasharray: 18 2 4 2; }
.hatched { fill: url(#hatch); stroke: none; }
.holes { stroke-width: 2; }
.canvas text { fill: #fff; font-family: "Noto Sans CJK SC", sans-serif; }
.note { font-size: 7px; font-style: italic; }
.cond { font-size: 8px; }
.canvas .part { font-size: 6px; fill: #c8b8a8; }
.sheets { display: flex; flex: none; height: 17px; border-top: 1px solid #999; }
.sheets button { display: grid; place-items: center; width: 16px; }
.sheets button svg { width: 8px; height: 8px; }
.sheets .sheet-tab { width: 39px; height: 15px; border-bottom: 1px solid #999; line-height: 14px; }
.sheets .on { width: 32px; background: #fff; font-size: 14px; font-weight: 700; }
.sheets .edge { width: 9px; height: 15px; }
.mark { position: absolute; right: 16px; bottom: 7px; font: 18px/26px "Liberation Sans", sans-serif; color: #aaa; text-shadow: 1px 1px 0 #777; }
```
